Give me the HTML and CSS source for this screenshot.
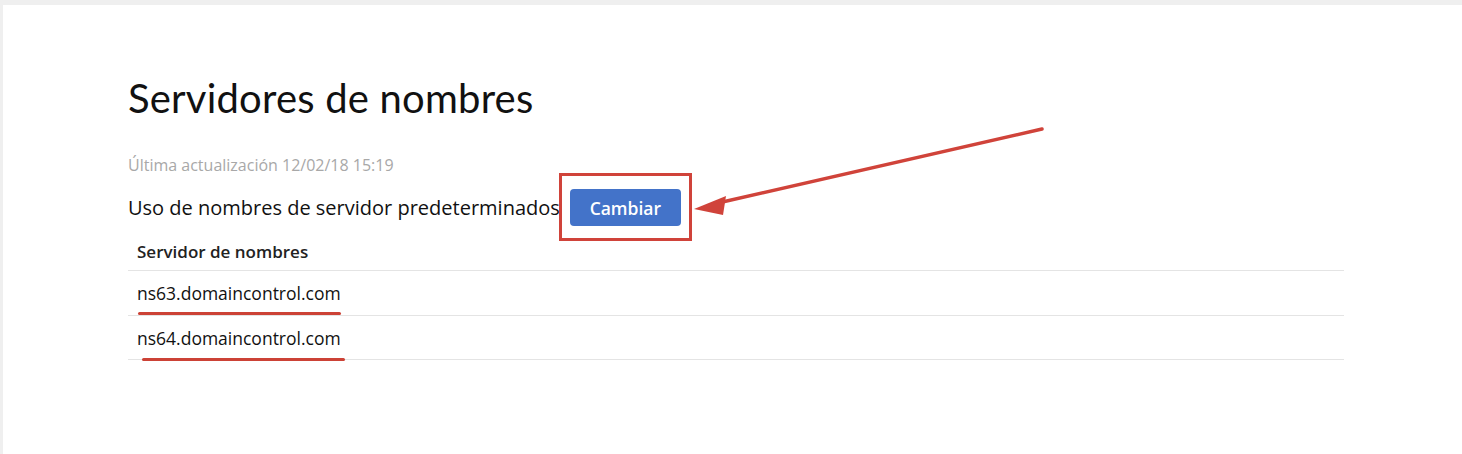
FILE: index.html
```html
<!DOCTYPE html>
<html lang="es">
<head>
<meta charset="utf-8">
<title>Servidores de nombres</title>
<link rel="stylesheet" href="styles.css">
</head>
<body>
<div class="card">
  <h1 class="title">Servidores de nombres</h1>
  <p class="updated">Última actualización 12/02/18 15:19</p>
  <div class="status-row">
    <span class="status-text">Uso de nombres de servidor predeterminados</span>
    <span class="btn-wrap"><button class="btn">Cambiar</button></span>
  </div>
  <div class="ns-table">
    <div class="ns-head">Servidor de nombres</div>
    <div class="ns-row"><span class="ns-name ns-mark-a">ns63.domaincontrol.com</span></div>
    <div class="ns-row"><span class="ns-name ns-mark-b">ns64.domaincontrol.com</span></div>
  </div>
</div>
<svg class="arrow" width="1462" height="454" viewBox="0 0 1462 454">
  <line x1="1042" y1="129" x2="718" y2="203" stroke="#d0433a" stroke-width="3.5" stroke-linecap="round"/>
  <polygon points="694,209 726,196 723,215" fill="#d0433a"/>
</svg>
</body>
</html>
```

FILE: styles.css
```css
html, body {
  margin: 0;
  padding: 0;
}
body {
  background: #efefef;
  width: 1462px;
  height: 454px;
  overflow: hidden;
  position: relative;
  font-family: "Open Sans", "Liberation Sans", sans-serif;
  color: #111;
}
.card {
  margin: 5px 0 0 3px;
  height: 449px;
  background: #fff;
  box-sizing: border-box;
  padding: 71px 0 0 125px;
}
.title {
  margin: 0;
  font-family: "Lato", "Liberation Sans", sans-serif;
  font-weight: 400;
  font-size: 40px;
  line-height: 44px;
  letter-spacing: 0.2px;
  color: #111;
}
.updated {
  margin: 35px 0 0 0;
  font-size: 16px;
  line-height: 20px;
  color: #a8a8a8;
}
.status-row {
  margin-top: 14px;
  display: flex;
  align-items: center;
}
.status-text {
  font-size: 20px;
  line-height: 24px;
  color: #111;
}
.btn-wrap {
  position: relative;
  margin-left: 10px;
  display: inline-flex;
}
.btn-wrap::after {
  content: "";
  position: absolute;
  left: -11px;
  right: -11px;
  top: -16px;
  bottom: -15px;
  border: 3px solid #d0433a;
}
.btn {
  width: 111px;
  height: 37px;
  border: none;
  border-radius: 4px;
  background: #4373c9;
  color: #fff;
  font-family: "Open Sans", "Liberation Sans", sans-serif;
  font-weight: 600;
  font-size: 17.5px;
  padding: 0;
}
.ns-table {
  width: 1216px;
  margin-top: 8px;
}
.ns-head {
  padding: 0 0 0 9px;
  height: 36px;
  line-height: 36px;
  font-size: 17px;
  font-weight: 600;
  color: #222;
  border-bottom: 1px solid #e4e4e4;
}
.ns-row {
  height: 44px;
  display: flex;
  align-items: center;
  padding-left: 9px;
  border-bottom: 1px solid #e4e4e4;
}
.ns-row + .ns-row {
  height: 43px;
}
.ns-name {
  position: relative;
  font-size: 17.5px;
  color: #111;
}
.ns-name::after {
  content: "";
  position: absolute;
  height: 3px;
  border-radius: 2px;
  background: #cc4236;
  width: 203px;
}
.ns-mark-a::after {
  left: 1px;
  top: 31px;
}
.ns-mark-b::after {
  left: 5px;
  top: 32px;
}
.arrow {
  position: absolute;
  left: 0;
  top: 0;
  pointer-events: none;
}
```
